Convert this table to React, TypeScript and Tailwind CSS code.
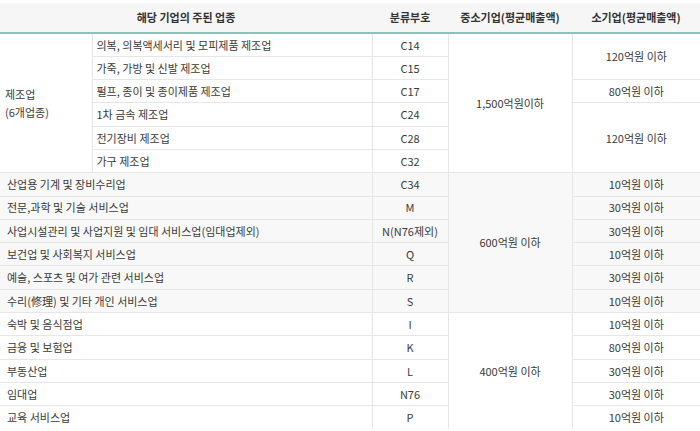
import React from "react";

interface Row {
  name: string;
  code: string;
}

const manufacturing: Row[] = [
  { name: "의복, 의복액세서리 및 모피제품 제조업", code: "C14" },
  { name: "가죽, 가방 및 신발 제조업", code: "C15" },
  { name: "펄프, 종이 및 종이제품 제조업", code: "C17" },
  { name: "1차 금속 제조업", code: "C24" },
  { name: "전기장비 제조업", code: "C28" },
  { name: "가구 제조업", code: "C32" },
];

const services: (Row & { small: string })[] = [
  { name: "산업용 기계 및 장비수리업", code: "C34", small: "10억원 이하" },
  { name: "전문,과학 및 기술 서비스업", code: "M", small: "30억원 이하" },
  { name: "사업시설관리 및 사업지원 및 임대 서비스업(임대업제외)", code: "N(N76제외)", small: "30억원 이하" },
  { name: "보건업 및 사회복지 서비스업", code: "Q", small: "10억원 이하" },
  { name: "예술, 스포츠 및 여가 관련 서비스업", code: "R", small: "30억원 이하" },
  { name: "수리(修理) 및 기타 개인 서비스업", code: "S", small: "10억원 이하" },
];

const others: (Row & { small: string })[] = [
  { name: "숙박 및 음식점업", code: "I", small: "10억원 이하" },
  { name: "금융 및 보험업", code: "K", small: "80억원 이하" },
  { name: "부동산업", code: "L", small: "30억원 이하" },
  { name: "임대업", code: "N76", small: "30억원 이하" },
  { name: "교육 서비스업", code: "P", small: "10억원 이하" },
];

const cell = "border border-[#e6e6e6] text-center align-middle";
const rowH = "h-[23.3px]";

export default function App() {
  return (
    <div
      className="w-[700px] h-[431px] overflow-hidden bg-white pt-[3px] text-[11px] text-[#3a3a3a]"
      style={{ fontFamily: '"Noto Sans CJK KR", "Noto Sans", sans-serif' }}
    >
      <table className="w-[700px] table-fixed border-collapse border-hidden">
        <colgroup>
          <col className="w-[92px]" />
          <col className="w-[280px]" />
          <col className="w-[76px]" />
          <col className="w-[124px]" />
          <col className="w-[128px]" />
        </colgroup>
        <thead>
          <tr className="h-[30px] bg-[#f6f6f6] font-bold text-[#333]">
            <th colSpan={2} className="border-b-2 border-b-[#86c5bc] text-center font-bold">
              해당 기업의 주된 업종
            </th>
            <th className="border-b-2 border-b-[#86c5bc] text-center font-bold">분류부호</th>
            <th className="border-b-2 border-b-[#86c5bc] text-center font-bold">중소기업(평균매출액)</th>
            <th className="border-b-2 border-b-[#86c5bc] text-center font-bold">소기업(평균매출액)</th>
          </tr>
        </thead>
        <tbody>
          {manufacturing.map((r, i) => (
            <tr key={r.code} className={rowH}>
              {i === 0 && (
                <td rowSpan={6} className="border border-[#e6e6e6] pl-[5px] text-left align-middle leading-[18px]">
                  제조업
                  <br />
                  (6개업종)
                </td>
              )}
              <td className="border border-[#e6e6e6] pl-[4px] text-left align-middle">{r.name}</td>
              <td className={cell}>{r.code}</td>
              {i === 0 && (
                <td rowSpan={6} className={cell}>
                  1,500억원이하
                </td>
              )}
              {i === 0 && (
                <td rowSpan={2} className={cell}>
                  120억원 이하
                </td>
              )}
              {i === 2 && <td className={cell}>80억원 이하</td>}
              {i === 3 && (
                <td rowSpan={3} className={cell}>
                  120억원 이하
                </td>
              )}
            </tr>
          ))}
          {services.map((r, i) => (
            <tr key={r.code} className={`${rowH} bg-[#f8f8f8]`}>
              <td colSpan={2} className="border border-[#e6e6e6] pl-[7px] text-left align-middle">
                {r.name}
              </td>
              <td className={cell}>{r.code}</td>
              {i === 0 && (
                <td rowSpan={6} className={cell}>
                  600억원 이하
                </td>
              )}
              <td className={cell}>{r.small}</td>
            </tr>
          ))}
          {others.map((r, i) => (
            <tr key={r.code} className={rowH}>
              <td colSpan={2} className="border border-[#e6e6e6] pl-[7px] text-left align-middle">
                {r.name}
              </td>
              <td className={cell}>{r.code}</td>
              {i === 0 && (
                <td rowSpan={5} className={cell}>
                  400억원 이하
                </td>
              )}
              <td className={cell}>{r.small}</td>
            </tr>
          ))}
        </tbody>
      </table>
    </div>
  );
}
